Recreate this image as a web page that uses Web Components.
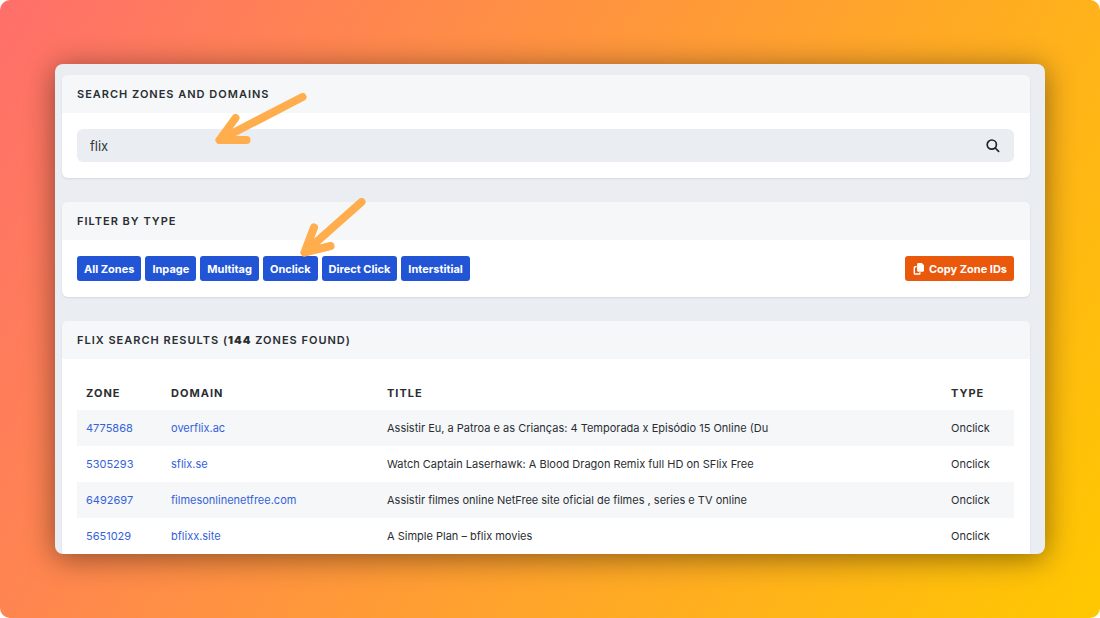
<!DOCTYPE html>
<html lang="en">
<head>
<meta charset="utf-8">
<meta name="viewport" content="width=device-width, initial-scale=1">
<title>Search Zones and Domains</title>
<style>
  html { background: #fff; }
  body { margin: 0; font-family: Inter, "Liberation Sans", sans-serif; font-size: 11px; line-height: 16px; color: #2a2e33; }
</style>
</head>
<body>
<app-stage>
  <panel-card>
    <span slot="title">Search Zones and Domains</span>
    <search-box value="flix"></search-box>
    <pointer-arrow slot="note" kind="long"></pointer-arrow>
  </panel-card>
  <panel-card>
    <span slot="title">Filter by Type</span>
    <filter-bar>
      <action-button>All Zones</action-button>
      <action-button>Inpage</action-button>
      <action-button>Multitag</action-button>
      <action-button>Onclick</action-button>
      <action-button>Direct Click</action-button>
      <action-button>Interstitial</action-button>
      <action-button slot="end" kind="copy">Copy Zone IDs</action-button>
    </filter-bar>
    <pointer-arrow slot="note" kind="steep"></pointer-arrow>
  </panel-card>
  <panel-card>
    <span slot="title">flix Search Results (<b>144</b> Zones Found)</span>
    <zone-table></zone-table>
  </panel-card>
</app-stage>

<script>
function define(name, html, setup) {
  const template = document.createElement('template');
  template.innerHTML = html;
  customElements.define(name, class extends HTMLElement {
    constructor() {
      super();
      this.attachShadow({ mode: 'open' }).append(template.content.cloneNode(true));
    }
    connectedCallback() { if (setup) setup(this, this.shadowRoot); }
  });
}

define('app-stage', `
<style>
  :host { display: flex; box-sizing: border-box; height: 100vh; padding: 64px 5%; border-radius: 10px;
    background: linear-gradient(120deg, #ff6f6b, #ffc800); }
  main { flex: 1; min-width: 0; box-sizing: border-box; overflow: hidden; padding: 11px 15px 0 7px;
    display: flex; flex-direction: column; gap: 24px; background: #eaedf2; border-radius: 8px;
    box-shadow: 0 4px 30px rgba(0, 0, 0, .45); }
</style>
<main><slot></slot></main>`);

define('panel-card', `
<style>
  :host { display: block; flex: none; position: relative; background: #fff; border-radius: 6px;
    box-shadow: 0 1px 2px rgba(30, 50, 80, .1); }
  h2 { margin: 0; padding: 11px 15px; background: #f5f7f9; border-radius: 6px 6px 0 0;
    font-size: 11px; line-height: 16px; font-weight: 600; letter-spacing: 1px; text-transform: uppercase; }
  .body { padding: 16px 16px 16px 15px; }
</style>
<h2><slot name="title"></slot></h2>
<div class="body"><slot></slot></div>
<slot name="note"></slot>`);

define('search-box', `
<style>
  :host { display: block; }
  form { display: flex; align-items: center; background: #eaedf2; border-radius: 6px; }
  input { flex: 1; min-width: 0; height: 33px; box-sizing: border-box; padding: 0 13px; border: 0; background: none;
    font: inherit; font-size: 13px; color: #343a40; outline: 0; }
  button { display: flex; padding: 8px 14px; border: 0; background: none; color: #212529; }
</style>
<form role="search">
  <input type="text" aria-label="Search zones and domains">
  <button type="button" aria-label="Search">
    <svg width="14" height="14" viewBox="0 0 14 14" fill="none" stroke="currentColor" stroke-width="1.7" stroke-linecap="round"><circle cx="5.8" cy="5.6" r="4.6"/><path d="M9.2 9 12.6 12.4"/></svg>
  </button>
</form>`, (el, root) => { root.querySelector('input').value = el.getAttribute('value') || ''; });

define('filter-bar', `
<style>
  :host { display: flex; justify-content: space-between; align-items: center; gap: 16px; }
  div { display: flex; flex-wrap: wrap; gap: 4px; }
</style>
<div><slot></slot></div>
<slot name="end"></slot>`);

define('action-button', `
<style>
  :host { display: block; flex: none; }
  button { display: flex; align-items: center; gap: 4px; height: 25px; box-sizing: border-box; padding: 0 7px;
    border: 0; border-radius: 3px; background: #2255d6; color: #fff; font: inherit; font-weight: 700; line-height: 16px; white-space: nowrap; }
  svg { display: none; }
  :host([kind=copy]) button { background: #ea580c; padding: 0 7px 0 8px; }
  :host([kind=copy]) svg { display: block; }
</style>
<button type="button">
  <svg width="12" height="12" viewBox="0 0 12 12" aria-hidden="true"><path fill="#fff" d="M5.3 0h3.5L11 2.2v5.3a1.2 1.2 0 0 1-1.2 1.2H5.3a1.2 1.2 0 0 1-1.2-1.2V1.2A1.2 1.2 0 0 1 5.3 0Z"/><path fill="none" stroke="#fff" stroke-width="1.4" d="M3.6 3.8H1.9a.6.6 0 0 0-.6.6v6a.6.6 0 0 0 .6.6h4.4a.6.6 0 0 0 .6-.6V9.3"/></svg>
  <span><slot></slot></span>
</button>`);

define('pointer-arrow', `
<style>
  :host { display: block; position: absolute; pointer-events: none; }
  :host([kind=long]) { left: 153px; top: 18px; }
  :host([kind=steep]) { left: 238px; top: -4px; }
  svg { display: block; }
  path { fill: none; stroke: #ffad4d; stroke-width: 8; stroke-linecap: round; stroke-linejoin: round; }
</style>
<svg aria-hidden="true"><path/></svg>`, (el, root) => {
  const long = el.getAttribute('kind') === 'long';
  const svg = root.querySelector('svg');
  svg.setAttribute('width', long ? 92 : 66);
  svg.setAttribute('height', long ? 51 : 60);
  root.querySelector('path').setAttribute('d', long ? 'M87.5 4 4.5 47M20.5 25 4.5 47H31.5' : 'M61.5 4 4.5 54.5M14 29.5 4.5 54.5 30.5 48');
});

const zones = [
  ['4775868', 'overflix.ac', 'Assistir Eu, a Patroa e as Crianças: 4 Temporada x Episódio 15 Online (Du', 'Onclick'],
  ['5305293', 'sflix.se', 'Watch Captain Laserhawk: A Blood Dragon Remix full HD on SFlix Free', 'Onclick'],
  ['6492697', 'filmesonlinenetfree.com', 'Assistir filmes online NetFree site oficial de filmes , series e TV online', 'Onclick'],
  ['5651029', 'bflixx.site', 'A Simple Plan – bflix movies', 'Onclick']
];

define('zone-table', `
<style>
  :host { display: block; }
  table { width: 100%; table-layout: fixed; border-collapse: collapse; }
  th, td { padding: 10px 9px; text-align: left; font-size: 11px; line-height: 16px; overflow-wrap: anywhere; }
  th { font-weight: 700; letter-spacing: 1px; text-transform: uppercase; padding: 10px 9px 9px; }
  th:nth-child(1) { width: 67px; }
  th:nth-child(2) { width: 198px; }
  th:nth-child(4) { width: 54px; }
  tbody tr:nth-child(odd) { background: #f5f7f9; }
  a { color: #3562da; text-decoration: none; }
</style>
<table>
  <thead><tr><th scope="col">Zone</th><th scope="col">Domain</th><th scope="col">Title</th><th scope="col">Type</th></tr></thead>
  <tbody></tbody>
</table>`, (el, root) => {
  const body = root.querySelector('tbody');
  body.replaceChildren();
  for (const zone of zones) {
    const row = body.insertRow();
    zone.forEach((text, i) => {
      const cell = row.insertCell();
      if (i > 1) { cell.textContent = text; return; }
      const link = document.createElement('a');
      link.href = '#' + text;
      link.textContent = text;
      cell.append(link);
    });
  }
});
</script>
</body>
</html>
